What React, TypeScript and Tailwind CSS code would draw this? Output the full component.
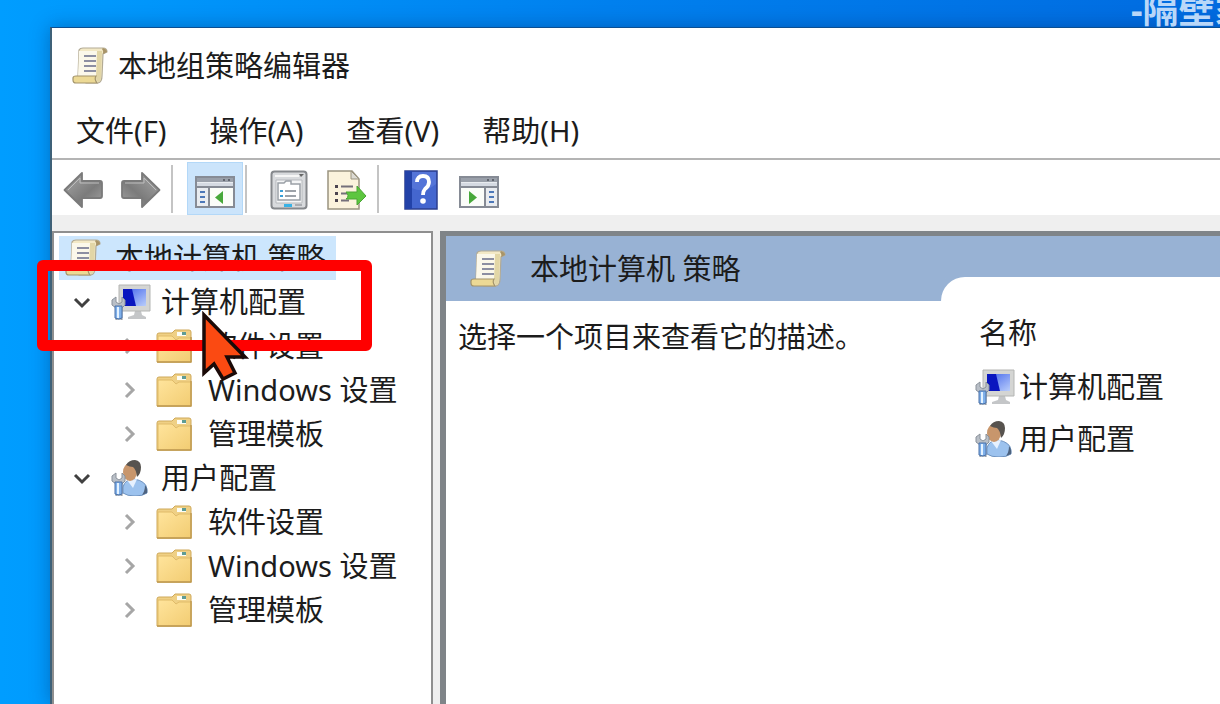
import { useState } from 'react'
import clsx from 'clsx'

type IconProps = { className?: string }

function ScrollIcon({ className }: IconProps) {
  return (
    <svg viewBox="0 0 36 38" className={className} aria-hidden="true">
      <path d="M7 3q1-2 4-2h20q4 0 4 4l-4 2-1 22q0 6-4 7H14L6 30z" fill="#f3e9c6" stroke="#b3ab95" strokeWidth="1.2" />
      <path d="M7 4l-1 26h19V4z" fill="#fbf8ea" />
      <path d="M25 4h5l-1 26q0 5-3 5-2-1-2-5z" fill="#e2d6a6" />
      <path d="M31 1q4 1 4 4l-4 2q1-3-1-5z" fill="#a89468" />
      <path d="M1 31q0-2 3-2h20q-2 3 1 7H4q-3 0-3-3z" fill="#ecd995" stroke="#a3946a" strokeWidth="1.2" />
      <path d="M12 9h12M12 14h12M12 19h12M12 24h12" stroke="#8d8fa2" strokeWidth="1.8" />
    </svg>
  )
}

function Wrench() {
  return (
    <>
      <path d="M1 16l4-3v5l3 2 3-2v-5l3 3v5l-3 3v12q-3 2-6 0V24l-4-3z" fill="#b9bfc7" stroke="#8b929b" />
      <path d="M4 22h7v12q-3 2-7 0z" fill="#7fb0ea" stroke="#4a71a8" />
      <path d="M7 23v11" stroke="#e4f2ff" strokeWidth="2" />
    </>
  )
}

function ComputerIcon({ className }: IconProps) {
  return (
    <svg viewBox="0 0 40 36" className={className} aria-hidden="true">
      <defs>
        <linearGradient id="screen" x1="0" y1="0" x2="1" y2="1">
          <stop offset="0" stopColor="#3f62ea" />
          <stop offset="1" stopColor="#b9cdfb" />
        </linearGradient>
      </defs>
      <path d="M24 27h6l1 4 4 2v2H17v-2l6-2z" fill="#c4c6c8" />
      <path d="M8 1h31v26H8z" fill="#d4d5d3" stroke="#b4b5b3" />
      <path d="M12 5h23v17H12z" fill="url(#screen)" />
      <path d="M12 5h9l4 17H12z" fill="#0a16bf" />
      <Wrench />
    </svg>
  )
}

function UserIcon({ className }: IconProps) {
  return (
    <svg viewBox="0 0 40 36" className={className} aria-hidden="true">
      <path d="M12 27q2-8 11-8 12 2 13 10v4q-4 3-12 3T12 33z" fill="#9cc2ee" stroke="#6f93c0" />
      <path d="M34 25q3 4 2 8l-5 2q3-4 3-10z" fill="#4d627e" />
      <path d="M16 20l6 8 4-9z" fill="#e6f1ff" />
      <ellipse cx="19" cy="12" rx="7" ry="9" fill="#c8966c" />
      <path d="M15 5q3-5 9-5 6 1 6 7 0 7-4 10-1-8-4-10-3 0-7-2z" fill="#57534f" />
      <Wrench />
    </svg>
  )
}

function FolderIcon({ className }: IconProps) {
  return (
    <svg viewBox="0 0 36 34" className={className} aria-hidden="true">
      <defs>
        <linearGradient id="folder" x1="0" y1="0" x2="1" y2="1">
          <stop offset="0" stopColor="#ffe49c" />
          <stop offset="1" stopColor="#f2cc72" />
        </linearGradient>
      </defs>
      <path d="M1 6q0-2 2-2h13l3-3h14q2 0 2 2v4h0v26H1z" fill="#efd085" stroke="#cfa95a" />
      <path d="M21 3h9v4h-9z" fill="#fdfdf5" />
      <path d="M26 3h4v3h-4z" fill="#5f9c94" />
      <path d="M2 7h14l4 4 3-2h12v24H2z" fill="url(#folder)" stroke="#e0bb69" />
      <path d="M1 33h34V8" fill="none" stroke="#bd9850" strokeWidth="1.4" />
    </svg>
  )
}

function ArrowIcon({ flip }: { flip?: boolean }) {
  return (
    <svg viewBox="0 0 40 38" className={clsx('h-[38px] w-10', flip && '-scale-x-100')} aria-hidden="true">
      <defs>
        <linearGradient id="arrow" x1="0" y1="0" x2="1" y2="1">
          <stop offset="0" stopColor="#a9a9a9" />
          <stop offset="0.6" stopColor="#7b7b7b" />
          <stop offset="1" stopColor="#a3a3a3" />
        </linearGradient>
      </defs>
      <path d="M1.500 19L19 2v8h18q2 0 2 2v13q0 2-2 2H19v9z" fill="url(#arrow)" stroke="#7a7a7a" strokeWidth="1.800" strokeLinejoin="round" />
      <path d="M5 19L17 7v5h19" fill="none" stroke="#bdbdbd" />
    </svg>
  )
}

function PaneIcon({ side }: { side: 'left' | 'right' }) {
  const left = side === 'left'
  return (
    <svg viewBox="0 0 40 32" className="mt-1 h-8 w-10" aria-hidden="true">
      <path d="M1 1h38v30H1z" fill="#e9ecf0" stroke="#868b95" strokeWidth="2" />
      <path d="M2 2h36v4H2z" fill="#9aa0aa" />
      <path d="M28 3h2v2h-2zM33 3h2v2h-2z" fill="#62666f" />
      <path d="M2 7h36v3H2z" fill="#d5dae2" />
      <path d="M1 11h38" stroke="#868b95" strokeWidth="2" />
      <path d={left ? 'M14 12v19' : 'M26 12v19'} stroke="#868b95" strokeWidth="2" />
      <path d={left ? 'M15 12h23v18H15z' : 'M2 12h23v18H2z'} fill="#fbfdf9" />
      <path
        d={left ? 'M5 16h5M5 21h5M5 26h5' : 'M30 16h5M30 21h5M30 26h5'}
        stroke="#4d78b8"
        strokeWidth="2"
      />
      <path d={left ? 'M28 15v13l-8-6.500z' : 'M10 15v13l8-6.500z'} fill="#47a83a" />
    </svg>
  )
}

function PropertiesIcon() {
  return (
    <svg viewBox="0 0 38 40" className="h-10 w-[38px]" aria-hidden="true">
      <rect x="1.500" y="1.500" width="35" height="37" rx="3" fill="#d8dadd" stroke="#85888c" strokeWidth="2" />
      <path d="M5 6h24" stroke="#f6f6f6" strokeWidth="2" />
      <path d="M29 4h5l-3 3z" fill="#666" />
      <path d="M6 10h26v23H6z" fill="#f4f5f6" stroke="#b6b9bd" />
      <path d="M8 13h6l2-2h5v3h9v16H8z" fill="#fff" stroke="#9aa0a6" strokeWidth="1.500" />
      <path d="M15 21h11M15 26h11" stroke="#9da2a9" strokeWidth="2" />
      <path d="M10 20h3v2h-3zM10 25h3v2h-3z" fill="#3a9fd6" />
      <path d="M14 34h8v3h-8z" fill="#38b2e6" />
      <path d="M25 34h7v2h-7z" fill="#a9acb1" />
    </svg>
  )
}

function ExportIcon() {
  return (
    <svg viewBox="0 0 40 40" className="h-10 w-10" aria-hidden="true">
      <path d="M1 1h24l7 8v30H1z" fill="#fbf3dc" stroke="#9b9480" strokeWidth="1.500" />
      <path d="M24 1v8h8z" fill="#dcdad2" stroke="#9b9480" />
      <path d="M8 15h3v3H8zM8 22h3v3H8zM8 29h3v3H8z" fill="#4c4550" />
      <path d="M14 16.500h12M14 23.500h6M14 30.500h8" stroke="#75707a" strokeWidth="2" />
      <path d="M19 22h11v-6l9 10-9 9v-6H19q4-3 0-7z" fill="#5dc63f" stroke="#4aa535" />
    </svg>
  )
}

function HelpIcon() {
  return (
    <svg viewBox="0 0 34 40" className="h-10 w-[34px]" aria-hidden="true">
      <path d="M1 1h32v38H1z" fill="#4466cf" stroke="#2d3f8e" strokeWidth="1.500" />
      <path d="M1 1h7v38H1z" fill="#2342a8" />
      <path d="M8 2h24v12q-12 10-24 4z" fill="#5474d8" />
      <path d="M13 12q0-6 6-6t6 6q0 4-4 7-2 2-2 6" fill="none" stroke="#fff" strokeWidth="3.800" />
      <circle cx="19" cy="31" r="2.800" fill="#fff" />
    </svg>
  )
}

function Chevron({ open }: { open?: boolean }) {
  return (
    <svg viewBox="0 0 18 18" className="size-[18px]" aria-hidden="true">
      <path
        d={open ? 'M2 6l7 7 7-7' : 'M6 2l7 7-7 7'}
        fill="none"
        stroke={open ? '#404040' : '#a6a6a6'}
        strokeWidth="3"
      />
    </svg>
  )
}

const MENUS = ['文件(F)', '操作(A)', '查看(V)', '帮助(H)']
const FOLDERS = ['软件设置', 'Windows 设置', '管理模板']
const ROOTS = [
  { label: '计算机配置', Icon: ComputerIcon },
  { label: '用户配置', Icon: UserIcon },
]

function ToolButton({ label, active, children }: { label: string; active?: boolean; children: React.ReactNode }) {
  return (
    <button
      type="button"
      aria-label={label}
      aria-pressed={active}
      className={clsx(
        'flex h-[53px] w-14 items-center justify-center pt-0.5',
        active && 'border border-[#b3d8f8] bg-[#cbe4fb]',
      )}
    >
      {children}
    </button>
  )
}

function Separator() {
  return <div className="mr-3 mb-0.5 h-12 w-0.5 bg-[#c4c4c4]" />
}

function TreeRoot({ label, Icon }: (typeof ROOTS)[number]) {
  const [open, setOpen] = useState(true)
  return (
    <li>
      <button type="button" onClick={() => setOpen(!open)} aria-expanded={open} className="flex h-11 items-center pl-[19px]">
        <Chevron open={open} />
        <Icon className="ml-5 h-9 w-10" />
        <span className="ml-2.5">{label}</span>
      </button>
      {open && (
        <ul>
          {FOLDERS.map(name => (
            <li key={name}>
              <button type="button" className="flex h-11 items-center pl-[66px]">
                <Chevron />
                <FolderIcon className="ml-[18px] h-[34px] w-9" />
                <span className="ml-4">{name}</span>
              </button>
            </li>
          ))}
        </ul>
      )}
    </li>
  )
}

export default function App() {
  return (
    <div
      lang="zh-CN"
      className="relative flex h-screen flex-col overflow-hidden bg-linear-to-r from-[#009dff] via-[#0080ee] to-[#006be0] pl-[50px] font-['Noto_Sans','Noto_Sans_CJK_SC',sans-serif] text-[29px] leading-9 whitespace-nowrap text-[#1c1c1c]"
    >
      <div className="h-[27px] shrink-0" />
      <main className="flex flex-1 flex-col border-t border-l-2 border-t-[#0b4f92] border-l-[#3f6178] bg-white shadow-[0_0_18px_rgba(0,30,80,0.35)]">
        <header className="flex h-[76px] items-center gap-2.5 pl-5">
          <ScrollIcon className="h-[38px] w-9" />
          <h1>本地组策略编辑器</h1>
        </header>
        <nav className="flex h-14 items-center gap-[43px] border-b-2 border-[#b4b4b4] pl-6">
          {MENUS.map(m => (
            <button key={m} type="button">{m}</button>
          ))}
        </nav>

        <div className="flex h-[55px] items-end gap-0.5 pl-[3px]">
          <ToolButton label="后退"><ArrowIcon /></ToolButton>
          <ToolButton label="前进"><ArrowIcon flip /></ToolButton>
          <Separator />
          <ToolButton label="显示/隐藏控制台树" active><PaneIcon side="left" /></ToolButton>
          <Separator />
          <ToolButton label="属性"><PropertiesIcon /></ToolButton>
          <ToolButton label="导出列表"><ExportIcon /></ToolButton>
          <Separator />
          <ToolButton label="帮助"><HelpIcon /></ToolButton>
          <ToolButton label="显示/隐藏操作窗格"><PaneIcon side="right" /></ToolButton>
        </div>

        <div className="flex flex-1 bg-[#efefef] pt-4">
          <aside className="w-[381px] shrink-0 border-2 border-b-0 border-[#8f8f8f] bg-white pt-[3px]">
            <button type="button" className="ml-[5px] flex h-11 items-center bg-[#cce6fd] pr-2.5 pl-1.5">
              <ScrollIcon className="h-[38px] w-9" />
              <span className="ml-3.5">本地计算机 策略</span>
            </button>
            <ul>
              {ROOTS.map(r => (
                <TreeRoot key={r.label} {...r} />
              ))}
            </ul>
          </aside>

          {/* Result pane, description on the left and item list on the right */}
          <section className="ml-[7px] flex flex-1 border-t-[5px] border-l-[6px] border-[#7f8488] bg-white">
            <div className="w-[495px] shrink-0">
              <div className="flex h-[65px] items-center gap-6 bg-[#98b2d4] pl-6">
                <ScrollIcon className="h-[38px] w-9" />
                <h2>本地计算机 策略</h2>
              </div>
              <p className="mt-[18px] pl-3">选择一个项目来查看它的描述。</p>
            </div>
            <div className="flex flex-1 flex-col">
              <div className="h-[41px] bg-[#98b2d4]" />
              <div className="bg-linear-to-b from-[#98b2d4] from-50% to-white to-50%">
                <div className="h-12 rounded-tl-[24px] bg-white" />
              </div>
              <table className="-mt-5 ml-[34px] self-start">
                <thead>
                  <tr>
                    <th className="h-14 pl-1 text-left font-normal">名称</th>
                  </tr>
                </thead>
                <tbody>
                  {ROOTS.map(({ label, Icon }) => (
                    <tr key={label}>
                      <td className="h-[52px]">
                        <span className="flex items-center gap-1">
                          <Icon className="h-9 w-10" />
                          {label}
                        </span>
                      </td>
                    </tr>
                  ))}
                </tbody>
              </table>
            </div>
          </section>
        </div>
      </main>

      <div className="absolute -top-3.5 left-[1131px] text-[36px] leading-[48px] font-bold text-[#b9d7f8]">-隔壁家</div>
      {/* Highlight frame and pointer */}
      <div className="absolute top-[260px] left-[37px] h-[91px] w-[335px] rounded-md border-[11px] border-[#ff0000]" />
      <svg viewBox="0 0 50 70" className="absolute top-[311px] left-[201px] h-[70px] w-[50px]" aria-hidden="true">
        <path d="M3 4v58l10-9 9 15 12-6-8-16h18z" fill="#fb4a12" stroke="#1a0a08" strokeWidth="3.500" />
      </svg>
    </div>
  )
}
